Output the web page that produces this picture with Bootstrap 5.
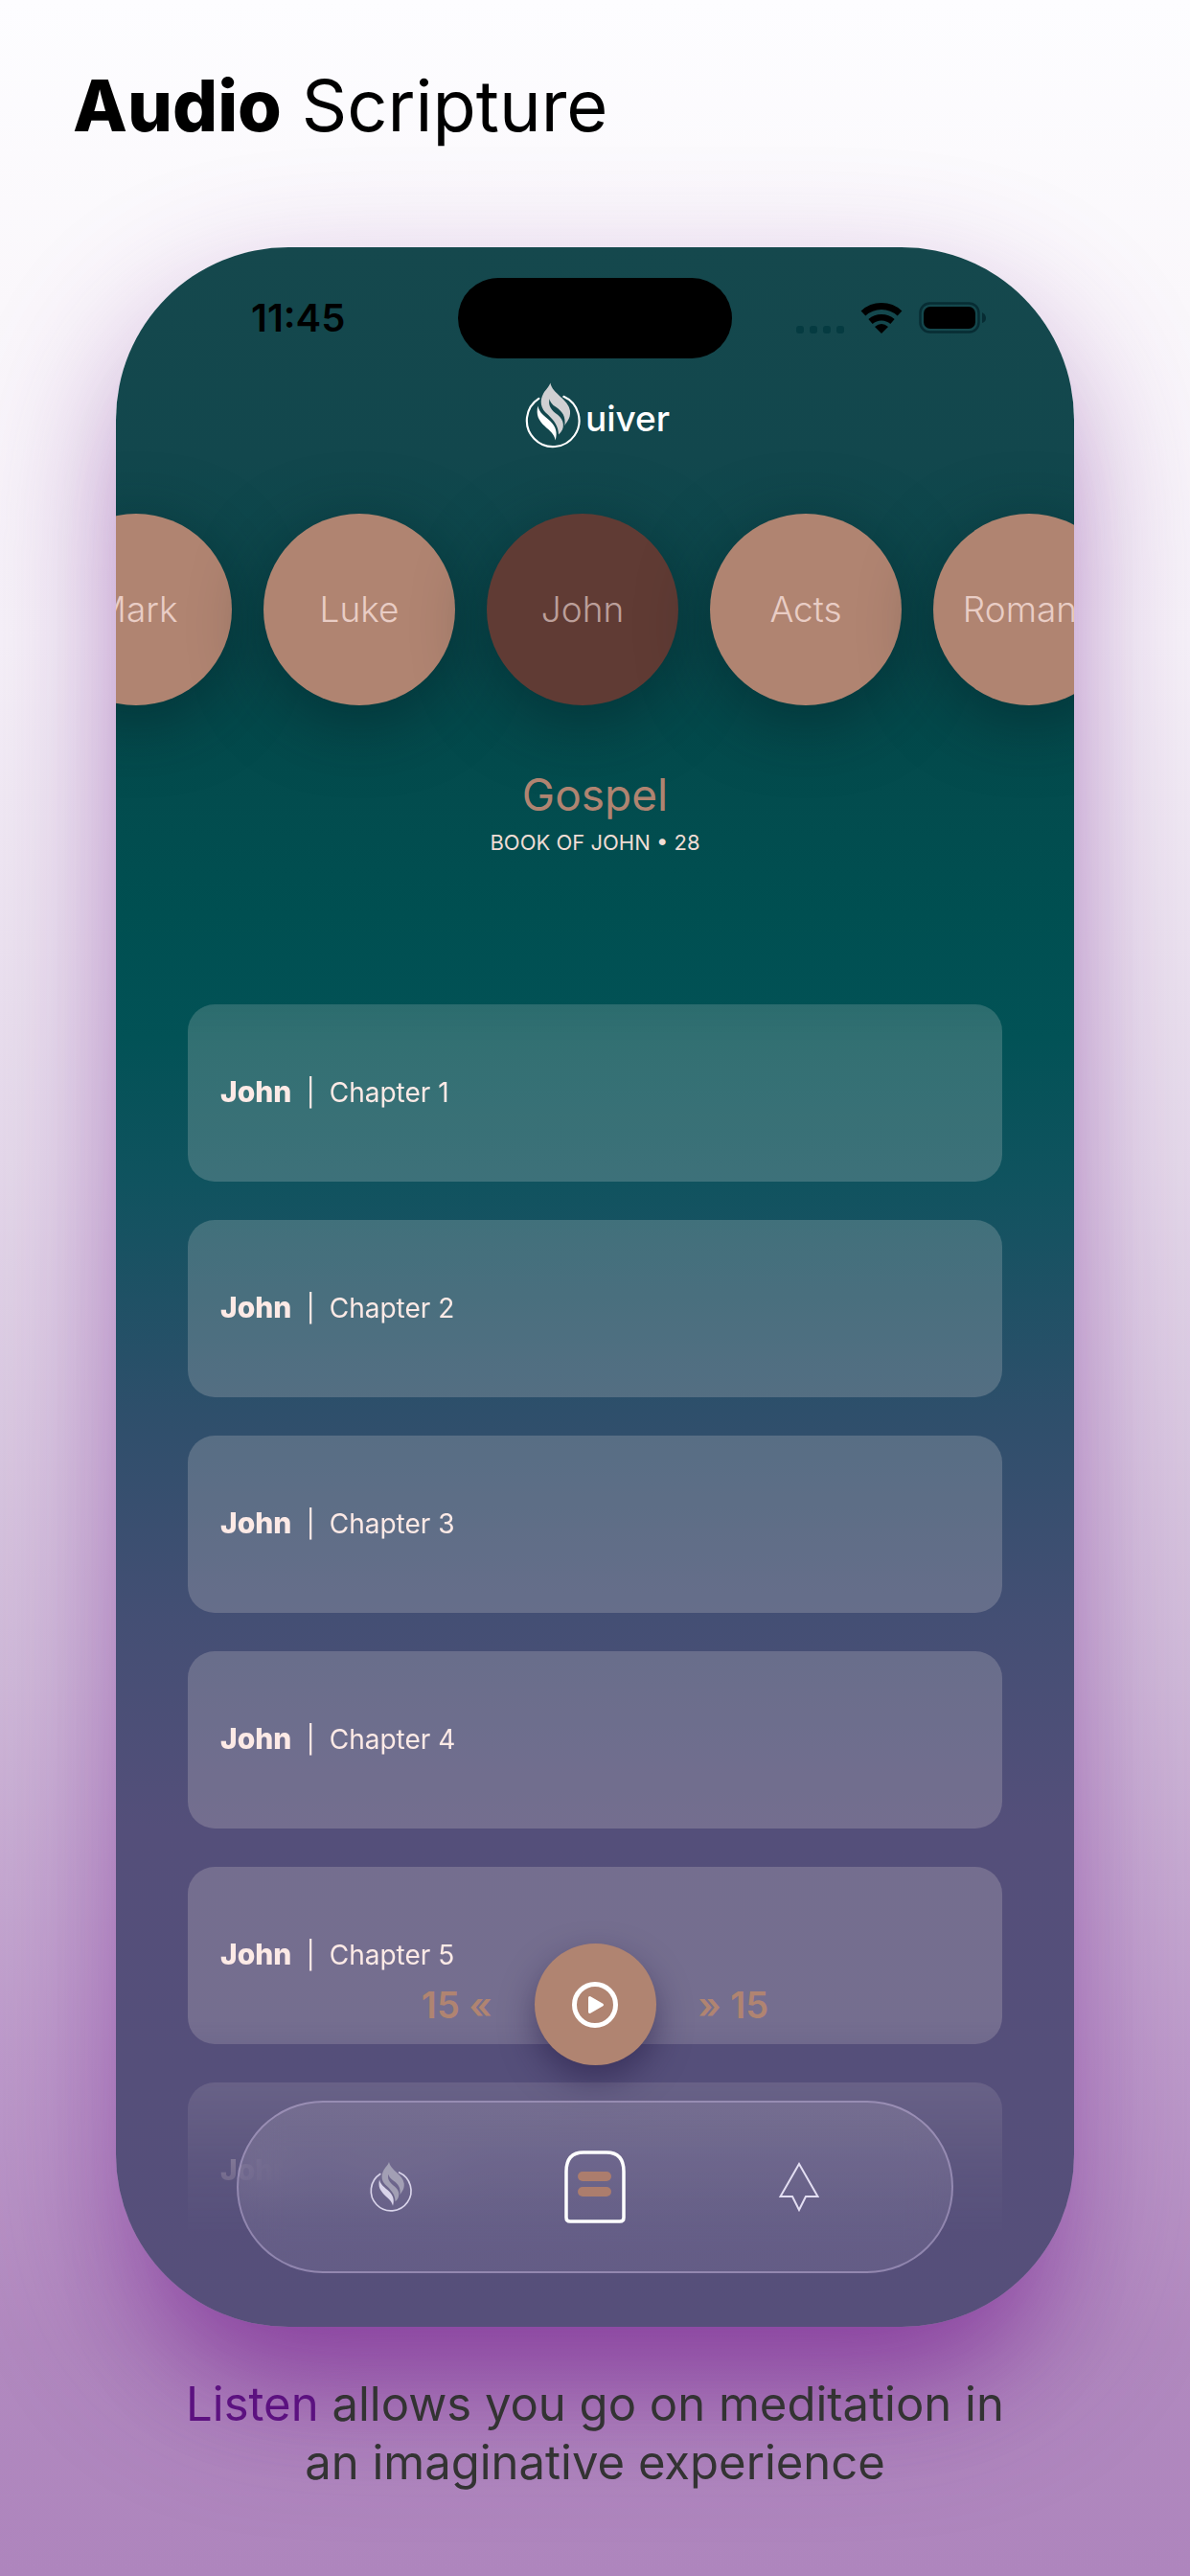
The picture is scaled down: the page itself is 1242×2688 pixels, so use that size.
<!DOCTYPE html>
<html lang="en">
<head>
<meta charset="utf-8">
<meta name="viewport" content="width=device-width, initial-scale=1">
<title>Audio Scripture</title>
<link href="https://cdn.jsdelivr.net/npm/bootstrap@5.3.0/dist/css/bootstrap.min.css" rel="stylesheet">
<script src="https://cdn.jsdelivr.net/npm/bootstrap@5.3.0/dist/js/bootstrap.bundle.min.js"></script>
<style>
  :root { --clay: #b08471; --blush: #fdeae6; }
  body {
    font-family: Inter, "Liberation Sans", sans-serif;
    color: #000;
    min-height: 100vh;
    background: linear-gradient(180deg, #fdfdff 0%, #faf7fb 12%, #f7f3f9 25%, #e6dbeb 45%, #d0bbd9 65%, #bd9bca 80%, #b189bf 91%, #ae85bd 100%);
  }
  .page-title { padding: 64px 76px 0; height: 258px; font-size: 74px; line-height: 92px; }
  .page-title strong { font-weight: 800; }
  .phone {
    margin: 0 121px;
    height: 2170px;
    border-radius: 180px;
    background: linear-gradient(180deg, #15484d 0%, #12474d 10%, #044a4c 23%, #004f51 32%, #025256 38%, #10535f 45%, #2e4f6b 56%, #444f74 66%, #544f7a 76%, #564f7a 100%);
    box-shadow: 0 60px 150px rgba(120, 40, 150, .44), 0 100px 110px -60px rgba(112, 12, 132, .45);
  }
  .phone-screen { border-radius: inherit; }
  .status-bar { padding: 32px 91px 0 141px; height: 140px; }
  .clock { width: 216px; font-size: 40px; line-height: 84px; font-weight: 600; }
  .island { width: 286px; height: 84px; background: #000; }
  .status-icons { height: 84px; gap: 17px; }
  .brand-name { font-size: 37px; line-height: 46px; font-weight: 500; color: #fff; }
  .brand { height: 90px; gap: 4px; padding-left: 4px; }
  .books { gap: 33px; margin: 48px 0 0 -79px; }
  .book-btn {
    width: 200px; height: 200px; flex: none; border: 0; border-radius: 50%;
    background: var(--clay); color: #e9cdc5;
    font-size: 37px; font-weight: 300;
    box-shadow: 0 16px 70px rgba(0, 30, 35, .5);
  }
  .book-btn.current { background: #603b34; color: #bb9f9a; }
  .section-name { margin: 65px 0 0; font-size: 46px; line-height: 56px; font-weight: 400; color: var(--clay); }
  .section-info { font-size: 22px; line-height: 28px; margin: 8px 0 0; color: #f0ddd5; }
  .chapters {
    padding: 0 75px; margin-top: 155px; height: 1300px; gap: 40px;
    -webkit-mask-image: linear-gradient(180deg, rgba(0,0,0,.88) 0, #000 40px, #000 1060px, rgba(0,0,0,.6) 1125px, rgba(0,0,0,.2) 1220px, transparent 1290px);
    mask-image: linear-gradient(180deg, rgba(0,0,0,.88) 0, #000 40px, #000 1060px, rgba(0,0,0,.6) 1125px, rgba(0,0,0,.2) 1220px, transparent 1290px);
  }
  .chapter {
    height: 185px; flex: none; padding: 0 34px 2px; border-radius: 28px; gap: 15px;
    background: rgba(244, 236, 232, .2); color: var(--blush); font-size: 28px; text-decoration: none;
  }
  .chapter strong { font-size: 30px; font-weight: 800; }
  .dock { left: 0; right: 0; bottom: 56px; padding: 0 126px; }
  .player { gap: 44px; margin-bottom: 37px; }
  .skip { border: 0; background: none; padding: 0; color: var(--clay); font-size: 38px; line-height: 44px; font-weight: 600; }
  .play { width: 127px; height: 127px; border: 0; border-radius: 50%; background: var(--clay); box-shadow: 0 16px 34px rgba(34, 24, 66, .5); }
  .tabs {
    height: 180px; border-radius: 90px; gap: 156px;
    border: 2px solid rgba(200, 185, 225, .45);
    background: linear-gradient(180deg, rgba(220, 210, 225, .14), rgba(190, 180, 210, .14));
    backdrop-filter: blur(22px);
  }
  .caption-text { padding: 50px 121px 0; margin: 0; font-size: 49px; line-height: 61px; color: #333; }
  .caption-text span { color: #5c1180; }
</style>
</head>
<body>
<svg class="d-none" xmlns="http://www.w3.org/2000/svg">
  <symbol id="flame" viewBox="140 86 180 212">
    <path d="M186 139A82 82 0 1 0 264 133" fill="none" stroke="var(--lit)" stroke-width="6.500" stroke-linecap="round"/>
    <path fill="var(--dim)" d="M222 90C228 124 280 142 284 178C286 205 272 212 267 225C271 195 260 180 240 166C228 158 221 150 220 140C214 160 225 175 245 190C266 206 270 234 248 252C247 225 235 210 215 190C190 170 188 145 201 122C210 108 218 103 222 90Z"/>
    <path fill="var(--lit)" d="M183 162C187 184 205 194 222 210C240 228 245 246 238 270C234 250 222 242 205 226C184 206 177 190 183 162Z"/>
  </symbol>
</svg>

<h1 class="page-title fw-normal m-0"><strong>Audio</strong> Scripture</h1>

<main class="phone">
  <div class="phone-screen position-relative overflow-hidden h-100">
    <div class="status-bar d-flex align-items-start">
      <div class="clock">11:45</div>
      <div class="island rounded-pill"></div>
      <div class="status-icons d-flex align-items-center ms-auto">
        <svg width="50" height="8" viewBox="0 0 50 8" fill="#053b41" class="mt-4"><rect width="8" height="8" rx="3"/><rect x="14" width="8" height="8" rx="3"/><rect x="28" width="8" height="8" rx="3"/><rect x="42" width="8" height="8" rx="3"/></svg>
        <svg width="44" height="32" viewBox="0 0 44 32"><path d="M3 11A28 28 0 0 1 41 11" fill="none" stroke="#000" stroke-width="7"/><path d="M10.500 19.500A17.500 17.500 0 0 1 33.500 19.500" fill="none" stroke="#000" stroke-width="6.500"/><path d="M15 25Q22 19 29 25L22 32Z"/></svg>
        <svg width="71" height="34" viewBox="0 0 71 34"><rect x="1.500" y="1.500" width="61" height="30" rx="10" fill="none" stroke="#072c33" stroke-width="2.500"/><rect x="5" y="5" width="54" height="23" rx="7"/><path d="M66 11Q70 13 70 17T66 22Z" fill="#072c33"/></svg>
      </div>
    </div>

    <div class="brand d-flex justify-content-center align-items-start">
      <svg width="60" height="71" style="--lit:#fff;--dim:#d0d0d2"><use href="#flame"/></svg>
      <div class="brand-name mt-3">uiver</div>
    </div>

    <nav class="books d-flex" aria-label="Books">
      <button class="book-btn" type="button">Mark</button>
      <button class="book-btn" type="button">Luke</button>
      <button class="book-btn current" type="button">John</button>
      <button class="book-btn" type="button">Acts</button>
      <button class="book-btn" type="button">Romans</button>
    </nav>

    <h2 class="section-name text-center">Gospel</h2>
    <p class="section-info text-center">BOOK OF JOHN • 28</p>

    <div class="chapters d-flex flex-column overflow-hidden">
      <a href="#" class="chapter d-flex align-items-center"><strong>John</strong><span>|</span><span>Chapter 1</span></a>
      <a href="#" class="chapter d-flex align-items-center"><strong>John</strong><span>|</span><span>Chapter 2</span></a>
      <a href="#" class="chapter d-flex align-items-center"><strong>John</strong><span>|</span><span>Chapter 3</span></a>
      <a href="#" class="chapter d-flex align-items-center"><strong>John</strong><span>|</span><span>Chapter 4</span></a>
      <a href="#" class="chapter d-flex align-items-center"><strong>John</strong><span>|</span><span>Chapter 5</span></a>
      <a href="#" class="chapter d-flex align-items-center"><strong>John</strong><span>|</span><span>Chapter 6</span></a>
    </div>

    <div class="dock position-absolute">
      <div class="player d-flex justify-content-center align-items-center">
        <button class="skip" type="button">15 «</button>
        <button class="play d-flex align-items-center justify-content-center p-0" type="button" aria-label="Play">
          <svg width="48" height="48" viewBox="0 0 48 48"><circle cx="24" cy="24" r="21.500" fill="none" stroke="#fff" stroke-width="5"/><path d="M18.500 16.500L31.500 24L18.500 31.500Z" fill="#fff" stroke="#fff" stroke-width="3" stroke-linejoin="round"/></svg>
        </button>
        <button class="skip" type="button">» 15</button>
      </div>
      <nav class="tabs d-flex align-items-center justify-content-center" aria-label="Main">
        <a href="#" aria-label="Home" class="d-flex"><svg width="50" height="54" style="--lit:#d9d4ea;--dim:#a29fb4"><use href="#flame"/></svg></a>
        <a href="#" aria-label="Scripture" class="d-flex"><svg width="64" height="76" viewBox="0 0 64 76"><path d="M2 70V22Q2 2 20 2H44Q62 2 62 22V70Q62 74 58 74H6Q2 74 2 70Z" fill="none" stroke="#fff" stroke-width="3.500"/><rect x="14" y="22" width="35" height="10" rx="5" fill="#ac7d6d"/><rect x="14" y="38" width="35" height="10" rx="5" fill="#ac7d6d"/></svg></a>
        <a href="#" aria-label="Nature" class="d-flex"><svg width="50" height="52" viewBox="0 0 42 52"><path d="M21 2L40.500 36H28L21 50L14 36H1.500Z" fill="none" stroke="#e3def2" stroke-width="2"/></svg></a>
      </nav>
    </div>
  </div>
</main>

<p class="caption-text text-center"><span>Listen</span> allows you go on meditation in<br>an imaginative experience</p>
</body>
</html>
